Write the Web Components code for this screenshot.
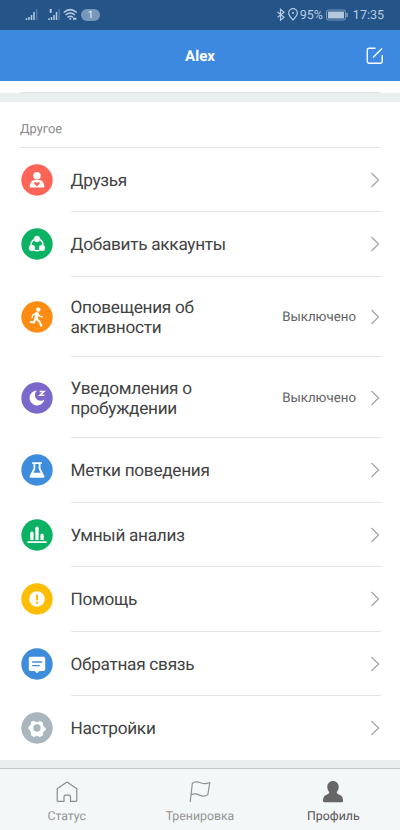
<!DOCTYPE html>
<html lang="ru"><head><meta charset="utf-8"><title>Профиль</title>
<style>
html,body{margin:0;padding:0}
body{width:400px;height:830px;overflow:hidden;background:#fff;font-family:Roboto,"Noto Sans",sans-serif;text-rendering:geometricPrecision}
</style></head><body>
<profile-app></profile-app>
<script>
const define=(name,html)=>customElements.define(name,class extends HTMLElement{
  constructor(){super();const t=document.createElement('template');t.innerHTML=html;
    this.attachShadow({mode:'open'}).append(t.content.cloneNode(true));}
});

const glyphs={
 friends:['#fd6558','<circle cx="16" cy="11.7" r="3.7"/><path d="M8.7 23.5c0-4.6 2-7.2 4.8-7.5h5c2.8.3 4.8 2.9 4.8 7.5z"/><path d="M16 22.4l-2.500-2.300c-1-1.200.5-2.700 1.700-1.800l.8.6.8-.6c1.200-.9 2.700.6 1.700 1.800z" fill="#fd6558"/>'],
 accounts:['#0bb263','<circle cx="16" cy="16.800" r="6" fill="none" stroke="#fff" stroke-width="1.600"/><g stroke="#0bb263" stroke-width=".3"><circle cx="16" cy="11" r="3.200"/><circle cx="11" cy="19.900" r="3.200"/><circle cx="21" cy="19.900" r="3.200"/></g>'],
 activity:['#fd8c12','<circle cx="17.300" cy="8.600" r="2.200"/><g fill="none" stroke="#fff" stroke-linecap="round" stroke-linejoin="round"><path d="M15.900 12.700l-.7 4.800" stroke-width="3.600"/><path d="M15.200 12.200l-3.300 1.700-.9 2.800M17 12.800l1.700 2.400 2.700.6" stroke-width="1.300"/><path d="M15.500 17.800l3 3 1.900 4M14.300 18.200l-1.400 3.300-3.200-.5" stroke-width="2"/></g>'],
 wake:['#7a68cb','<path d="M16 8.500a7.500 7.500 0 1 0 7.400 8.900 5.300 5.300 0 0 1-7.400-8.900z"/><path d="M18.700 9.500h4.300L18.900 13.300h4.400" fill="none" stroke="#fff" stroke-width="1.500"/>'],
 behavior:['#3e8ddd','<path d="M11 8.200h10v1.600h-1.500v4.700l3.700 7.200q.8 2-1.300 2H10.100q-2.100 0-1.300-2l3.700-7.200V9.800H11z"/><path d="M14.300 10v5.100l-1.900 3.700h7.200l-1.900-3.700V10z" fill="#3e8ddd"/>'],
 analysis:['#0bb263','<path d="M7.200 23.200h17.600" stroke="#fff" stroke-width="1.700" stroke-linecap="round"/><path d="M10.900 21v-6.500M16 21V9.500M21.100 21v-4" stroke="#fff" stroke-width="3.200"/><path d="M10.900 15v-1M16 10v-1M21.100 17v-1" stroke="#fff" stroke-width="3.200" stroke-linecap="round"/>'],
 help:['#fdbd03','<circle cx="16" cy="16" r="7.800"/><path d="M16 12.200v4.600" stroke="#fdbd03" stroke-width="2" stroke-linecap="round"/><circle cx="16" cy="20" r="1.150" fill="#fdbd03"/>'],
 feedback:['#3e8ddd','<path d="M9.500 8.700h13q1.700 0 1.700 1.700v10.800q0 1.700-1.700 1.700h-4L16 25.200l-2.500-2.300h-4q-1.700 0-1.700-1.700V10.400q0-1.700 1.700-1.700z"/><path d="M11.700 14h9M11.700 17.600h6.500" stroke="#3e8ddd" stroke-width="1.400" stroke-linecap="round"/>'],
 settings:['#a9b6be','<path d="M13.300 9.300L14.700 10.400h2.600l1.400-1.100 3 1.700-.3 1.900 1.300 2.100 1.400.8v2.400l-1.400.8-1.300 2.100.3 1.900-3 1.700-1.400-1.100h-2.600l-1.400 1.100-3-1.700.3-1.900L9.300 18l-1.400-.8v-2.400l1.400-.8 1.300-2.100-.3-1.900z" stroke="#fff" stroke-linejoin="round"/><circle cx="16" cy="16" r="3.700" fill="#a9b6be"/>']
};

define('status-bar',`<style>
:host{display:flex;align-items:center;box-sizing:border-box;height:30px;padding:0 16px 0 24px;background:#255488;color:#b9cde3;font-size:12.500px;border-bottom:1px solid #285486}
.left,.right{display:flex;align-items:center}.right{margin-left:auto}
.right span{padding-top:2px}
.badge{box-sizing:border-box;padding-top:1px;margin-left:4px;width:19px;height:12px;border-radius:6px;background:#7897b9;font-size:10px;line-height:12px;text-align:center;color:#e7f0fa}
.time{margin-left:4px}svg{display:block}
</style><div class="left">
<svg width="53" height="16" viewBox="24 7 53 16" fill="none" stroke="#b5cbe2" stroke-width="1.500">
<path d="M26.500 20v-1.800M29 20v-3M31.500 20v-5M34 20v-8"/><path d="M36.700 20V9" opacity=".3"/>
<path d="M49 20v-1.800M51.500 20v-3M54 20v-5M56.500 20v-8"/><path d="M50.700 9v3.800" stroke-width="2"/><path d="M59.200 20V9" opacity=".3"/>
<path d="M63.700 12.500q6.700-5.700 13 0M65.500 15q4.900-3.900 9.300 0M67.500 17.300q2.900-2 5.500 0"/><path d="M69.500 18.800h1.700M73 18.800h3.400" stroke-width="2"/></svg>
<span class="badge">1</span></div>
<div class="right"><svg width="24" height="16" viewBox="277 7 24 16" fill="none" stroke="#b5cbe2" stroke-width="1.200">
<path d="M278.500 12l6.500 5.200-3.500 3V9.300l3.500 2.900-6.500 5.200"/><path d="M294 20q-4.300-4.300-4.300-7a4.300 4.300 0 0 1 8.600 0q0 2.700-4.300 7z"/><circle cx="294" cy="13" r="1" fill="#b5cbe2" stroke="none"/></svg>
<span>95%</span><svg style="margin-left:3px" width="23" height="12" viewBox="0 0 23 12" fill="#b5c7dc"><rect x=".5" y="1" width="19" height="10" rx="2" fill="none" stroke="#7d9bbd"/><rect x="2" y="2.500" width="16" height="7" rx=".5"/><path d="M20.500 4h1v4h-1z"/></svg><span class="time">17:35</span></div>`);

define('title-bar',`<style>
:host{display:grid;grid-template-columns:1fr auto 1fr;align-items:center;height:51px;padding:0 16px;background:#3d89df;color:#fff}
b{grid-column:2;font-size:15px;font-weight:700;line-height:20px}svg{justify-self:end}
</style><b><slot></slot></b><svg width="18" height="18" viewBox="0 0 18 18" fill="none" stroke="#fff" stroke-width="1.400"><path d="M9.500 1.300H3Q1.300 1.300 1.300 3V14.500Q1.300 16.200 3 16.200H14.500Q16.200 16.200 16.200 14.500V8M7 10.500L16 1.500"/></svg>`);

customElements.define('menu-row',class extends HTMLElement{
 constructor(){super();const [color,art]=glyphs[this.getAttribute('icon')];
 this.attachShadow({mode:'open'}).innerHTML=`<style>
:host{display:flex;align-items:center;box-sizing:border-box;height:65px;padding:0 20px 1px 21px;color:#424242;background:linear-gradient(#e3e3e3,#e3e3e3) 71px 100%/310px 1px no-repeat}
:host([short]){height:64px}:host([tall]){height:81px}:host([last]){background:none}
.ico{flex:none}.label{margin-left:17.500px;flex:1;padding-top:2px;font-size:17.200px;line-height:20px;letter-spacing:-.27px}
.value{font-size:13.300px;color:#626262;margin-right:14px;padding-top:2px}
</style><svg class="ico" width="32" height="32" viewBox="0 0 32 32" fill="#fff"><circle cx="16" cy="16" r="15.700" fill="${color}"/>${art}</svg>
<div class="label"><slot></slot></div><div class="value"><slot name="value"></slot></div>
<svg width="10" height="16" viewBox="0 0 10 16" fill="none" stroke="#a2a2a2" stroke-width="1.200"><path d="M1.500 1l7 7-7 7"/></svg>`;}
});

define('nav-item',`<style>
:host{flex:1;display:flex;flex-direction:column;align-items:center;padding-top:11px;color:#949494;font-size:12.300px;line-height:16px}
:host([active]){color:#555}.t{margin-top:5px}
</style><slot name="icon"></slot><span class="t"><slot></slot></span>`);

define('bottom-nav',`<style>
:host{display:flex;box-sizing:border-box;height:62px;border-top:1px solid #c0c7c9;background:#f4f7f8}
svg{display:block}
</style>
<nav-item><svg slot="icon" width="24" height="24" viewBox="0 0 24 24" fill="none" stroke="#8a8a8a" stroke-width="1.200" stroke-linejoin="round"><path d="M3 21.300q-.8 0-.8-.8V8.700L12 2l9.800 6.700v11.800q0 .8-.8.800h-5.500v-4.600q0-1.500-1.500-1.500h-3.500q-1.500 0-1.500 1.500v4.600z"/></svg>Статус</nav-item>
<nav-item><svg slot="icon" width="24" height="24" viewBox="0 0 24 24" fill="none" stroke="#929292" stroke-width="1.200" stroke-linejoin="round"><path d="M2.200 22L4.300 3.500C7.500.5 10.500 2 13 3s5 1.200 8.800-.5l-2 12.300c-3 2-5.500 1.700-8.300.3s-5-2-8.200-.300"/></svg>Тренировка</nav-item>
<nav-item active><svg slot="icon" width="24" height="24" viewBox="0 0 24 24" fill="#666"><path d="M12 1c3.300 0 5.700 2.500 5.700 5.800 0 2.200-.7 4-2 5.500.2 1.500 1.700 1.900 3.300 2.700 2.500 1.200 3 3.500 3 6 0 .8-.4 1.200-1.200 1.200H3.200C2.400 22.200 2 21.800 2 21c0-2.500.5-4.800 3-6 1.600-.8 3.100-1.200 3.300-2.700-1.300-1.500-2-3.300-2-5.500C6.300 3.500 8.700 1 12 1z"/></svg>Профиль</nav-item>`);

define('profile-app',`<style>
:host{display:flex;flex-direction:column;width:400px;height:830px}
.peek{height:12px;background:linear-gradient(#e3e6e6,#e3e6e6) 20px 100%/361px 1px no-repeat}
.gap{height:9px;background:#eaeeee}.gap.end{height:8px}
h2{margin:0 20px;height:45px;border-bottom:1px solid #e3e3e3;font-size:12.800px;font-weight:400;line-height:55px;color:#8b8b8b}
</style>
<status-bar></status-bar><title-bar>Alex</title-bar><div class="peek"></div><div class="gap"></div>
<h2>Другое</h2>
<menu-row icon="friends" short>Друзья</menu-row>
<menu-row icon="accounts">Добавить аккаунты</menu-row>
<menu-row icon="activity" tall style="height:80px">Оповещения об<br>активности<span slot="value">Выключено</span></menu-row>
<menu-row icon="wake" tall style="padding-bottom:0">Уведомления о<br>пробуждении<span slot="value">Выключено</span></menu-row>
<menu-row icon="behavior">Метки поведения</menu-row>
<menu-row icon="analysis" short>Умный анализ</menu-row>
<menu-row icon="help">Помощь</menu-row>
<menu-row icon="feedback" short>Обратная связь</menu-row>
<menu-row icon="settings" short last>Настройки</menu-row>
<div class="gap end"></div><bottom-nav></bottom-nav>`);
</script></body></html>
